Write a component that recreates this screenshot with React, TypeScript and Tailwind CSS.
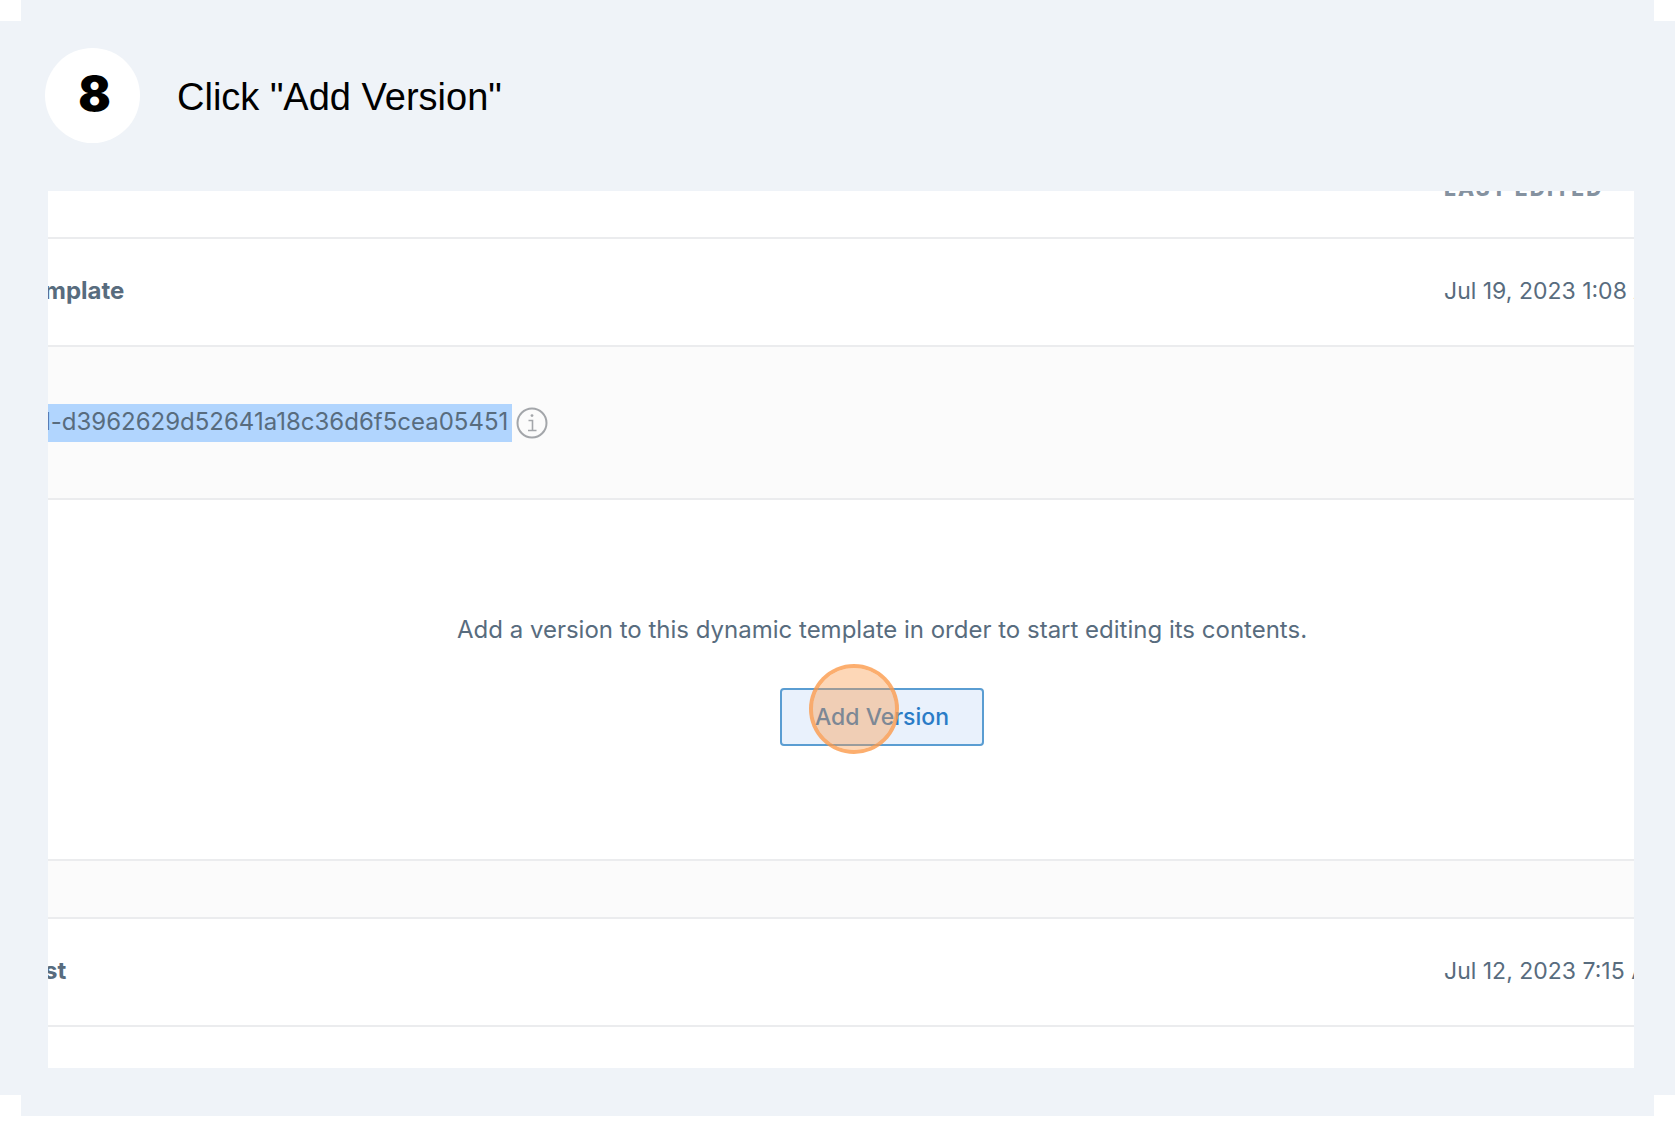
function InfoIcon() {
  return (
    <svg viewBox="0 0 32 32" className="size-8" fill="none" stroke="#a3a6aa" strokeWidth="2" aria-hidden="true">
      <circle cx="16" cy="16" r="14.5" />
      <path d="M12.5 13.5H16.5V23.5M12 23.5H20.5" strokeWidth="1.6" />
      <circle cx="16" cy="8.6" r="1.4" fill="#a3a6aa" stroke="none" />
    </svg>
  );
}

function StepHeader() {
  return (
    <header className="flex items-center gap-[37px] pl-[45px]">
      <span className="flex size-[95px] items-center justify-center rounded-full bg-white pb-1 pl-1 font-[Inter,sans-serif] text-[48px] leading-none font-black text-black">
        8
      </span>
      <h1 className="pt-0.5 font-['Liberation_Sans',sans-serif] text-[38px] leading-none text-black">
        Click "Add Version"
      </h1>
    </header>
  );
}

function TemplateRow({ name, date }: { name: string; date: string }) {
  return (
    <tr className="h-[108px] border-b-2 border-[#ebecee]">
      <th scope="row" className="p-0 pb-0.5 text-left font-bold">
        <span className="-ml-1 block">{name}</span>
      </th>
      <td className="p-0 pb-0.5 text-[23px] whitespace-nowrap">{date}</td>
    </tr>
  );
}

function TemplatesTable() {
  return (
    <div className="mt-12 mr-[41px] ml-12 overflow-hidden bg-white">
      <table className="w-[calc(100%+82px)] table-fixed border-collapse font-[Inter,sans-serif] text-2xl text-[#586c7e]">
        <colgroup>
          <col />
          <col className="w-[272px]" />
        </colgroup>
        <thead>
          <tr className="h-[47px] border-b-2 border-[#ebecee] align-top">
            <th className="p-0" aria-label="Template name" />
            <th scope="col" className="p-0 text-left">
              <span className="-mt-3 block text-[21px] leading-5 font-extrabold tracking-widest text-[#8592a0]">LAST EDITED</span>
            </th>
          </tr>
        </thead>
        <tbody>
          <TemplateRow name="mplate" date="Jul 19, 2023 1:08 AM" />
          <tr className="h-[153px] border-b-2 border-[#ebecee] bg-[#fbfbfb]">
            <td colSpan={2} className="p-0">
              <div className="-ml-3 flex items-center gap-1">
                <span className="bg-[#b1d5fe] pr-1 pb-0.5 leading-9">d-d3962629d52641a18c36d6f5cea05451</span>
                <button type="button" aria-label="About template ID">
                  <InfoIcon />
                </button>
              </div>
            </td>
          </tr>
          <tr className="h-[361px] border-b-2 border-[#ebecee]">
            <td colSpan={2} className="p-0">
              <div className="flex flex-col items-center gap-[42px]">
                <p>Add a version to this dynamic template in order to start editing its contents.</p>
                <div className="relative">
                  <button
                    type="button"
                    className="rounded-sm border-2 border-[#5a9dd2] bg-[#e9f1fc] px-[33px] py-3 text-[23px] leading-[30px] font-medium text-[#2a7cc7]"
                  >
                    Add Version
                  </button>
                  <span className="pointer-events-none absolute -top-6 left-[29px] size-[90px] rounded-full border-4 border-[#fb9a4a]/80 bg-[#fb9a4a]/40 bg-clip-padding" />
                </div>
              </div>
            </td>
          </tr>
          <tr className="h-[58px] border-b-2 border-[#ebecee] bg-[#fbfbfb]">
            <td colSpan={2} className="p-0" />
          </tr>
          <TemplateRow name="st" date="Jul 12, 2023 7:15 AM" />
          <tr className="h-[42px]">
            <td colSpan={2} className="p-0" />
          </tr>
        </tbody>
      </table>
    </div>
  );
}

export default function App() {
  return (
    <div className="bg-white pr-[5px] pb-1.5">
      <main className="relative bg-[#eff3f8] py-12">
        <span className="absolute top-0 left-0 size-[21px] bg-white" />
        <span className="absolute top-0 right-0 size-[21px] bg-white" />
        <span className="absolute bottom-0 left-0 size-[21px] bg-white" />
        <span className="absolute right-0 bottom-0 size-[21px] bg-white" />
        <StepHeader />
        <TemplatesTable />
      </main>
    </div>
  );
}
